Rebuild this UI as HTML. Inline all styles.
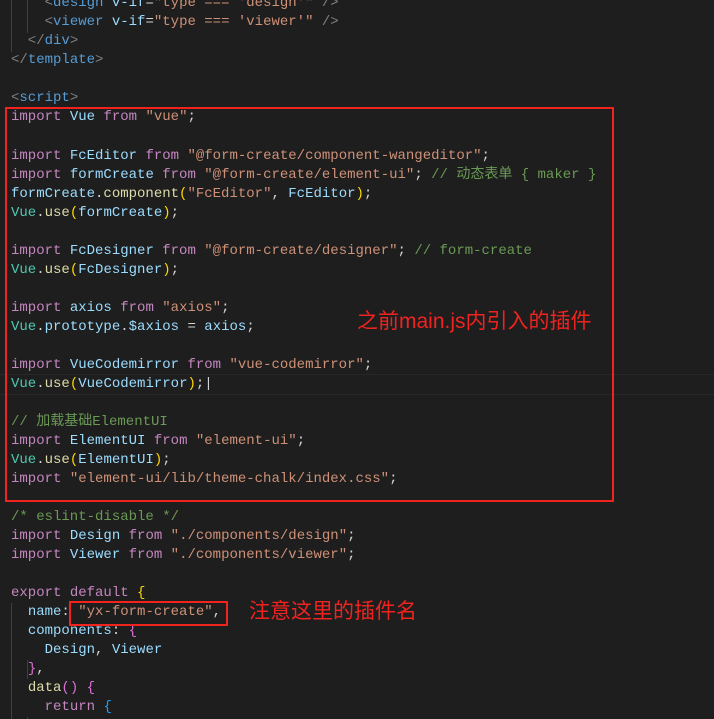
<!DOCTYPE html><html><head><meta charset="utf-8"><style>
body{margin:0;width:714px;height:719px;background:#1e1e1e;overflow:hidden;position:relative;font-family:"Liberation Mono","Noto Sans CJK SC",monospace;font-size:14px}
.ln{position:absolute;left:11px;height:19px;line-height:19px;white-space:pre;color:#d4d4d4}
.k{color:#c586c0}.v{color:#9cdcfe}.s{color:#ce9178}.c{color:#6a9955}.t{color:#569cd6}.g{color:#808080}.f{color:#dcdcaa}.n{color:#4ec9b0}.y{color:#ffd700}.p{color:#da70d6}.b{color:#179fff}
.box{position:absolute;border:2px solid #f0231e}
.ann{position:absolute;color:#f0231e;font-family:"Liberation Sans","Noto Sans CJK SC",sans-serif;font-size:21px;line-height:24px;white-space:nowrap}
.gd{position:absolute;width:1px;background:#404040}
</style></head><body>
<div style="position:absolute;left:0;top:374px;width:714px;height:19px;border-top:1px solid #282828;border-bottom:1px solid #282828"></div>
<div class="gd" style="left:11px;top:0;height:52px"></div>
<div class="gd" style="left:27px;top:0;height:33px"></div>
<div class="gd" style="left:11px;top:603px;height:116px"></div>
<div class="gd" style="left:27px;top:660px;height:19px"></div>
<div class="gd" style="left:27px;top:717px;height:2px"></div>
<div class="ln" style="top:-6px"><span class="g">    &lt;</span><span class="t">design</span> <span class="v">v-if</span>=<span class="s">"type === 'design'"</span> <span class="g">/&gt;</span></div>
<div class="ln" style="top:13px"><span class="g">    &lt;</span><span class="t">viewer</span> <span class="v">v-if</span>=<span class="s">"type === 'viewer'"</span> <span class="g">/&gt;</span></div>
<div class="ln" style="top:32px"><span class="g">  &lt;/</span><span class="t">div</span><span class="g">&gt;</span></div>
<div class="ln" style="top:51px"><span class="g">&lt;/</span><span class="t">template</span><span class="g">&gt;</span></div>
<div class="ln" style="top:89px"><span class="g">&lt;</span><span class="t">script</span><span class="g">&gt;</span></div>
<div class="ln" style="top:108px"><span class="k">import</span> <span class="v">Vue</span> <span class="k">from</span> <span class="s">"vue"</span>;</div>
<div class="ln" style="top:147px"><span class="k">import</span> <span class="v">FcEditor</span> <span class="k">from</span> <span class="s">"@form-create/component-wangeditor"</span>;</div>
<div class="ln" style="top:166px"><span class="k">import</span> <span class="v">formCreate</span> <span class="k">from</span> <span class="s">"@form-create/element-ui"</span>; <span class="c">// 动态表单 { maker }</span></div>
<div class="ln" style="top:185px"><span class="v">formCreate</span>.<span class="f">component</span><span class="y">(</span><span class="s">"FcEditor"</span>, <span class="v">FcEditor</span><span class="y">)</span>;</div>
<div class="ln" style="top:204px"><span class="n">Vue</span>.<span class="f">use</span><span class="y">(</span><span class="v">formCreate</span><span class="y">)</span>;</div>
<div class="ln" style="top:242px"><span class="k">import</span> <span class="v">FcDesigner</span> <span class="k">from</span> <span class="s">"@form-create/designer"</span>; <span class="c">// form-create</span></div>
<div class="ln" style="top:261px"><span class="n">Vue</span>.<span class="f">use</span><span class="y">(</span><span class="v">FcDesigner</span><span class="y">)</span>;</div>
<div class="ln" style="top:299px"><span class="k">import</span> <span class="v">axios</span> <span class="k">from</span> <span class="s">"axios"</span>;</div>
<div class="ln" style="top:318px"><span class="n">Vue</span>.<span class="v">prototype</span>.<span class="v">$axios</span> = <span class="v">axios</span>;</div>
<div class="ln" style="top:356px"><span class="k">import</span> <span class="v">VueCodemirror</span> <span class="k">from</span> <span class="s">"vue-codemirror"</span>;</div>
<div class="ln" style="top:375px"><span class="n">Vue</span>.<span class="f">use</span><span class="y">(</span><span class="v">VueCodemirror</span><span class="y">)</span>;|</div>
<div class="ln" style="top:413px"><span class="c">// 加载基础ElementUI</span></div>
<div class="ln" style="top:432px"><span class="k">import</span> <span class="v">ElementUI</span> <span class="k">from</span> <span class="s">"element-ui"</span>;</div>
<div class="ln" style="top:451px"><span class="n">Vue</span>.<span class="f">use</span><span class="y">(</span><span class="v">ElementUI</span><span class="y">)</span>;</div>
<div class="ln" style="top:470px"><span class="k">import</span> <span class="s">"element-ui/lib/theme-chalk/index.css"</span>;</div>
<div class="ln" style="top:508px"><span class="c">/* eslint-disable */</span></div>
<div class="ln" style="top:527px"><span class="k">import</span> <span class="v">Design</span> <span class="k">from</span> <span class="s">"./components/design"</span>;</div>
<div class="ln" style="top:546px"><span class="k">import</span> <span class="v">Viewer</span> <span class="k">from</span> <span class="s">"./components/viewer"</span>;</div>
<div class="ln" style="top:584px"><span class="k">export</span> <span class="k">default</span> <span class="y">{</span></div>
<div class="ln" style="top:603px">  <span class="v">name</span>: <span class="s">"yx-form-create"</span>,</div>
<div class="ln" style="top:622px">  <span class="v">components</span>: <span class="p">{</span></div>
<div class="ln" style="top:641px">    <span class="v">Design</span>, <span class="v">Viewer</span></div>
<div class="ln" style="top:660px">  <span class="p">}</span>,</div>
<div class="ln" style="top:679px">  <span class="f">data</span><span class="p">()</span> <span class="p">{</span></div>
<div class="ln" style="top:698px">    <span class="k">return</span> <span class="b">{</span></div>
<div class="box" style="left:5px;top:107px;width:605px;height:391px"></div>
<div class="box" style="left:69px;top:601px;width:155px;height:21px"></div>
<div class="ann" style="left:357px;top:310px">之前main.js内引入的插件</div>
<div class="ann" style="left:249px;top:600px">注意这里的插件名</div>
</body></html>
